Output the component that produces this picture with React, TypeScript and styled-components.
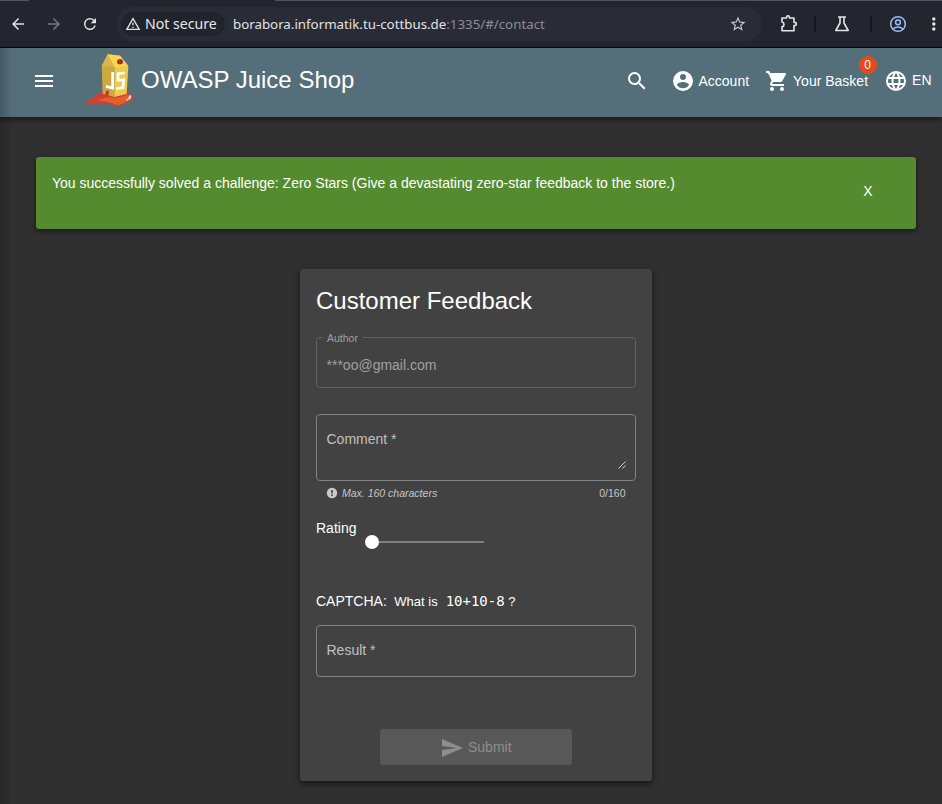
import React from "react";
import styled, { createGlobalStyle } from "styled-components";

const sans = `"Liberation Sans", Arial, sans-serif`;

const GlobalStyle = createGlobalStyle`
  * { box-sizing: border-box; }
  html, body { margin: 0; padding: 0; background: #303030; overflow: hidden; }
  body { font: 14px/20px ${sans}; color: #fff; }
`;

const Window = styled.div`
  position: relative;
  width: 942px;
  height: 804px;
  overflow: hidden;
  background: #303030;
`;

const EdgeShade = styled.div`
  position: absolute;
  left: 0;
  top: 48px;
  bottom: 0;
  width: 12px;
  background: linear-gradient(to right, rgba(0, 0, 0, 0.2), rgba(0, 0, 0, 0));
  pointer-events: none;
`;

const Icon = styled.svg<{ $size?: number; $color?: string }>`
  display: block;
  flex: none;
  width: ${(p) => p.$size ?? 24}px;
  height: ${(p) => p.$size ?? 24}px;
  fill: ${(p) => p.$color ?? "#fff"};
`;

/* Browser toolbar */

const TabEdge = styled.div`
  display: flex;
  justify-content: space-between;
  height: 1px;
  background: #24262f;
`;

const TabEdgeLine = styled.span<{ $width: number }>`
  width: ${(p) => p.$width}px;
  background: #51545d;
`;

const BrowserBar = styled.div`
  display: flex;
  align-items: center;
  height: 47px;
  padding: 0 0 1px 9px;
  background: #24262f;
  border-bottom: 1px solid #07080a;
`;

const NavButtons = styled.div`
  display: flex;
  gap: 18px;
  width: 107px;
`;

const AddressBar = styled.div`
  display: flex;
  align-items: center;
  flex: none;
  width: 646px;
  height: 34px;
  padding: 0 15px 0 5px;
  border-radius: 17px;
  background: #292b36;
  font-family: "Noto Sans", sans-serif;
`;

const SecurityChip = styled.div`
  display: flex;
  align-items: center;
  gap: 4px;
  width: 104px;
  height: 24px;
  margin-right: 8px;
  padding-left: 4px;
  border-radius: 12px;
  background: #22242d;
  color: #e6e7ea;
  font-size: 14.1px;
  white-space: nowrap;
`;

const Url = styled.div`
  flex: 1;
  color: #e2e3e7;
  font-size: 13.3px;
  white-space: nowrap;
`;

const UrlPath = styled.span`
  color: #8c8e98;
`;

const Extensions = styled.div`
  display: flex;
  align-items: center;
  flex: none;
  width: 180px;
  padding-left: 18px;
`;

const Divider = styled.span`
  flex: none;
  width: 2px;
  height: 16px;
  margin: 0 17px 0 16px;
  background: #17181e;
`;

const WideDivider = styled(Divider)`
  margin: 0 17px 0 19px;
`;

const Menu = styled.span`
  margin-left: 25px;
`;

/* Shop header */

const Header = styled.header`
  display: flex;
  align-items: center;
  height: 69px;
  padding: 0 10.5px 4px 32px;
  background: #546e7a;
  box-shadow: 0 2px 6px rgba(0, 0, 0, 0.55);
`;

const Brand = styled.div`
  display: flex;
  align-items: center;
  flex: 1;
  margin-left: 24px;
`;

const Logo = styled.svg`
  flex: none;
  width: 60px;
  height: 60px;
  margin: 1px 1px 0 0;
`;

const ShopName = styled.h1`
  margin: 0 0 1px;
  font: 400 24px/32px ${sans};
  white-space: nowrap;
`;

const HeaderItem = styled.div<{ $gap?: number; $before: number }>`
  position: relative;
  display: flex;
  align-items: center;
  gap: ${(p) => p.$gap ?? 3}px;
  margin-left: ${(p) => p.$before}px;
  white-space: nowrap;
`;

const Language = styled.span`
  margin-bottom: 2px;
`;

const Badge = styled.span`
  position: absolute;
  top: -13px;
  right: -8.5px;
  width: 18px;
  height: 18px;
  border-radius: 50%;
  background: #e64a19;
  font-size: 12px;
  line-height: 18px;
  text-align: center;
`;

/* Content */

const Alert = styled.div`
  display: flex;
  justify-content: space-between;
  height: 72px;
  margin: 40px 26px 40px 36px;
  padding: 16px 43.5px 16px 16px;
  border-radius: 3px;
  background: #558b2f;
  box-shadow: 0 2px 5px rgba(0, 0, 0, 0.55);
`;

const CloseButton = styled.button`
  align-self: flex-start;
  margin-top: 8px;
  padding: 0;
  border: 0;
  background: none;
  color: #fff;
  font: 14px/20px ${sans};
`;

const Card = styled.main`
  display: flex;
  flex-direction: column;
  width: 352px;
  height: 512px;
  margin: 0 0 0 300px;
  padding: 16px;
  border-radius: 3px;
  background: #424242;
  box-shadow: 0 3px 7px rgba(0, 0, 0, 0.6);
`;

const Title = styled.h2`
  margin: 0 0 20px;
  font: 400 24px/32px ${sans};
`;

const Field = styled.div<{ $height: number; $disabled?: boolean }>`
  position: relative;
  flex: none;
  height: ${(p) => p.$height}px;
  padding: ${(p) => (p.$disabled ? 17 : 14)}px 9.5px;
  border: 1px solid ${(p) => (p.$disabled ? "#616161" : "#818181")};
  border-radius: 4px;
  color: ${(p) => (p.$disabled ? "#a0a0a0" : "#c0c0c0")};
`;

const CommentField = styled(Field)`
  margin-top: 26px;
`;

const FloatingLabel = styled.span`
  position: absolute;
  top: -7px;
  left: 6px;
  padding: 0 5px 0 4px;
  background: #424242;
  font-size: 10.5px;
  line-height: 14px;
`;

const ResizeGrip = styled.svg`
  position: absolute;
  right: 9px;
  bottom: 11px;
  width: 8px;
  height: 8px;
`;

const HintRow = styled.div`
  display: flex;
  align-items: center;
  height: 14px;
  margin: 5px 10.5px 0 10px;
  color: #c6c6c6;
  font-size: 10.5px;
  line-height: 14px;
`;

const HintText = styled.em`
  flex: 1;
  margin-left: 4px;
`;

const RatingRow = styled.div`
  display: flex;
  margin-top: 18px;
  height: 55px;
`;

const Slider = styled.div`
  display: flex;
  align-items: center;
  width: 119px;
  height: 14px;
  margin: 17px 0 0 9px;
`;

const Thumb = styled.span`
  width: 14px;
  height: 14px;
  border-radius: 50%;
  background: #fff;
`;

const Track = styled.span`
  flex: 1;
  height: 2px;
  background: #7d7d7d;
`;

const Captcha = styled.div`
  display: flex;
  align-items: baseline;
  height: 20px;
  margin: 18px 0 14px;
  white-space: pre;
`;

const Question = styled.span`
  margin-left: 7.5px;
  font-size: 13px;
`;

const Formula = styled.code`
  margin: 0 3.5px 0 8px;
  font: 14px/20px "DejaVu Sans Mono", monospace;
`;

const QuestionMark = styled.span`
  font-size: 13px;
`;

const SubmitButton = styled.button`
  display: flex;
  align-items: center;
  align-self: center;
  gap: 4px;
  width: 192px;
  height: 36px;
  margin-top: 52px;
  padding: 0 0 0 60px;
  border: 0;
  border-radius: 3px;
  background: #585858;
  color: #8e8e8e;
  font: 14px/20px ${sans};
`;

const SendIcon = styled(Icon)`
  margin-top: 2px;
`;

export default function App() {
  return (
    <>
      <GlobalStyle />
      <Window>
        <TabEdge>
          <TabEdgeLine $width={29} />
          <TabEdgeLine $width={667} />
        </TabEdge>
        <BrowserBar>
          <NavButtons>
            <Icon viewBox="0 0 24 24" $size={18} $color="#e0e1e5"><path d="M20 11H7.83l5.59-5.59L12 4l-8 8 8 8 1.41-1.41L7.83 13H20z" /></Icon>
            <Icon viewBox="0 0 24 24" $size={18} $color="#777981"><path d="m12 4-1.41 1.41L16.17 11H4v2h12.17l-5.58 5.59L12 20l8-8z" /></Icon>
            <Icon viewBox="0 0 24 24" $size={18} $color="#e0e1e5"><path d="M17.65 6.35A8 8 0 1 0 19.73 14h-2.08A6 6 0 1 1 12 6c1.66 0 3.14.69 4.22 1.78L13 11h7V4z" /></Icon>
          </NavButtons>
          <AddressBar>
            <SecurityChip>
              <Icon viewBox="0 0 24 24" $size={16} $color="#e0e1e5"><path d="M12 5.99 19.53 19H4.47zM12 2 1 21h22zm1 14h-2v2h2zm0-6h-2v4h2z" /></Icon>
              Not secure
            </SecurityChip>
            <Url>borabora.informatik.tu-cottbus.de<UrlPath>:1335/#/contact</UrlPath></Url>
            <Icon viewBox="0 0 24 24" $size={18} $color="#c5c6ca"><path d="m22 9.24-7.19-.62L12 2 9.19 8.63 2 9.24l5.46 4.73L5.82 21 12 17.27 18.18 21l-1.63-7.03zM12 15.4l-3.76 2.27 1-4.28-3.32-2.88 4.38-.38L12 6.1l1.71 4.04 4.38.38-3.32 2.88 1 4.28z" /></Icon>
          </AddressBar>
          <Extensions>
            <Icon viewBox="0 0 18 18" $size={18} $color="none"><path d="M2 3h4.6V2.2a1.4 1.4 0 0 1 2.8 0V3H14v4.4h.8a1.6 1.6 0 0 1 0 3.2H14V15.7H2v-3.8a2.5 2.5 0 0 0 0-4.9z" stroke="#e4e5e8" strokeWidth="1.6" strokeLinejoin="round" /></Icon>
            <Divider />
            <Icon viewBox="0 0 18 18" $size={18} $color="none"><path d="M5 2h8M7 2v6L2.8 15.5h12.4L11 8V2" stroke="#e4e5e8" strokeWidth="1.6" strokeLinejoin="round" /></Icon>
            <WideDivider />
            <Icon viewBox="0 0 18 18" $size={18} $color="none"><g stroke="#9dbdf5" strokeWidth="1.5"><circle cx="9" cy="9" r="7.3" /><circle cx="9" cy="7.3" r="2.4" /><path d="M3.8 14q5.2-4 10.4 0" /></g></Icon>
            <Menu><Icon viewBox="0 0 18 18" $size={18} $color="#e4e5e8"><circle cx="1.8" cy="4" r="1.7" /><circle cx="1.8" cy="9" r="1.7" /><circle cx="1.8" cy="14" r="1.7" /></Icon></Menu>
          </Extensions>
        </BrowserBar>
        <Header>
          <Icon viewBox="0 0 24 24"><path d="M3 18h18v-2H3zm0-5h18v-2H3zm0-7v2h18V6z" /></Icon>
          <Brand>
            <Logo viewBox="0 0 180 180">
              <path d="M18 157c5-10 18-12 27-21 10-10 18-14 34-13l60 5c16 0 22 8 19 17-4 9-17 7-25 13-11 8-26 10-39 3-13-5-26-5-41-3-14 2-35 5-35-1z" fill="#d3402a" />
              <path d="M52 149c16-9 30-11 47-9 20 2 30-5 43-9 14 1 17 9 13 13-5 7-16 6-24 12-10 7-24 8-35 1-13-6-27-8-44-8z" fill="#e2602f" />
              <path d="M65 45 83 10l20 37v91l-35-10z" fill="#cba841" />
              <path d="m83 10 37 4 25 31-5 84-37 9V47z" fill="#efcb4d" />
              <path d="m83 10 37 4 25 31-42 3z" fill="#fad64f" />
              <path d="m83 10 20 37-38-2z" fill="#d9b649" />
              <ellipse cx="120" cy="32" rx="9" ry="8" fill="#a52a18" />
              <ellipse cx="118" cy="29" rx="3" ry="2" fill="#d4533a" />
              <path d="M98 63v48l-20-5M134 66l-20 2v20l17-2-2 24-20 3" stroke="#fff" strokeWidth="8" fill="none" />
              <path d="m76 133 2-13 9-2-2 15z" fill="#b83824" />
              <ellipse cx="149" cy="139" rx="3" ry="7" transform="rotate(25 149 139)" fill="#fff" />
              <circle cx="141" cy="146" r="2.5" fill="#ffe1d5" />
            </Logo>
            <ShopName>OWASP Juice Shop</ShopName>
          </Brand>
          <Icon viewBox="0 0 24 24"><path d="M15.5 14h-.79l-.28-.27A6.47 6.47 0 0 0 16 9.5 6.5 6.5 0 1 0 9.5 16c1.61 0 3.09-.59 4.23-1.57l.27.28v.79l5 4.99L20.49 19zm-6 0C7.01 14 5 11.99 5 9.5S7.01 5 9.5 5 14 7.01 14 9.5 11.99 14 9.5 14" /></Icon>
          <HeaderItem $before={22}>
            <Icon viewBox="0 0 24 24"><path d="M12 2a10 10 0 1 0 0 20 10 10 0 0 0 0-20m0 3a3 3 0 1 1 0 6 3 3 0 0 1 0-6m0 14.2a7.2 7.2 0 0 1-6-3.22c.03-1.99 4-3.08 6-3.08s5.97 1.09 6 3.08a7.2 7.2 0 0 1-6 3.22" /></Icon>
            Account
          </HeaderItem>
          <HeaderItem $before={16} $gap={4}>
            <Icon viewBox="0 0 24 24"><path d="M7 18a2 2 0 1 0 0 4 2 2 0 0 0 0-4M1 2v2h2l3.6 7.59-1.35 2.45C4.52 15.37 5.48 17 7 17h12v-2H7.42a.25.25 0 0 1-.25-.25l.03-.12.9-1.63h7.45c.75 0 1.41-.41 1.75-1.03l3.58-6.49A1 1 0 0 0 20.01 4H5.21l-.94-2zm16 16a2 2 0 1 0 0 4 2 2 0 0 0 0-4" /></Icon>
            Your Basket
            <Badge>0</Badge>
          </HeaderItem>
          <HeaderItem $before={16} $gap={4}>
            <Icon viewBox="0 0 24 24"><path d="M11.99 2a10 10 0 1 0 0 20 10 10 0 0 0 0-20m6.93 6h-2.95a15.65 15.65 0 0 0-1.38-3.56A8.03 8.03 0 0 1 18.92 8M12 4.04c.83 1.2 1.48 2.53 1.91 3.96h-3.82c.43-1.43 1.08-2.76 1.91-3.96M4.26 14a8.2 8.2 0 0 1 0-4h3.38a16.5 16.5 0 0 0 0 4zm.82 2h2.95c.32 1.25.78 2.45 1.38 3.56A8 8 0 0 1 5.08 16m2.95-8H5.08a8 8 0 0 1 4.33-3.56A15.65 15.65 0 0 0 8.03 8M12 19.96A14 14 0 0 1 10.09 16h3.82A14 14 0 0 1 12 19.96M14.34 14H9.66a14.7 14.7 0 0 1 0-4h4.68a14.6 14.6 0 0 1 0 4m.25 5.56c.6-1.11 1.06-2.31 1.38-3.56h2.95a8.03 8.03 0 0 1-4.33 3.56M16.36 14a16.5 16.5 0 0 0 0-4h3.38a8.2 8.2 0 0 1 0 4z" /></Icon>
            <Language>EN</Language>
          </HeaderItem>
        </Header>
        <Alert>
          <span>You successfully solved a challenge: Zero Stars (Give a devastating zero-star feedback to the store.)</span>
          <CloseButton>X</CloseButton>
        </Alert>
        <Card>
          <Title>Customer Feedback</Title>
          <Field $height={51} $disabled>
            <FloatingLabel>Author</FloatingLabel>
            ***oo@gmail.com
          </Field>
          <CommentField $height={67}>
            Comment *
            <ResizeGrip viewBox="0 0 8 8"><path d="m.5 7.5 7-7m-3 7 3-3" stroke="#d0d0d0" fill="none" /></ResizeGrip>
          </CommentField>
          <HintRow>
            <Icon viewBox="0 0 12 12" $size={12} $color="#c9c9c9"><circle cx="6" cy="6" r="5.2" /><path d="M5.2 3h1.6v3.6H5.2zm0 4.6h1.6v1.5H5.2z" fill="#424242" /></Icon>
            <HintText>Max. 160 characters</HintText>
            0/160
          </HintRow>
          <RatingRow>
            Rating
            <Slider><Thumb /><Track /></Slider>
          </RatingRow>
          <Captcha>
            CAPTCHA:<Question>What is</Question><Formula>10+10-8</Formula><QuestionMark>?</QuestionMark>
          </Captcha>
          <Field $height={52}>Result *</Field>
          <SubmitButton disabled>
            <SendIcon viewBox="0 0 24 24" $color="#8e8e8e"><path d="M2.01 21 23 12 2.01 3 2 10l15 2-15 2z" /></SendIcon>
            Submit
          </SubmitButton>
        </Card>
        <EdgeShade />
      </Window>
    </>
  );
}
